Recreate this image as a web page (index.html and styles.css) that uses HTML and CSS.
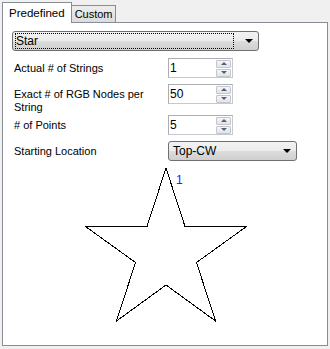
FILE: index.html
```html
<!DOCTYPE html>
<html lang="en">
<head>
    <meta charset="UTF-8">
    <title>Star Model</title>
    <link rel="stylesheet" href="styles.css">
</head>
<body>
    <div class="window">
        <div class="tabs">
            <div class="tab active">Predefined</div>
            <div class="tab">Custom</div>
        </div>

        <div class="panel">
            <div class="combo combo-wide">
                <span class="combo-text focused">Star</span>
                <span class="arrow"></span>
            </div>

            <div class="form">
                <div class="label">Actual # of Strings</div>
                <div class="spin">
                    <span class="spin-value">1</span>
                    <span class="spin-buttons"><span class="up"></span><span class="down"></span></span>
                </div>

                <div class="label label-top">Exact # of RGB Nodes per String</div>
                <div class="spin">
                    <span class="spin-value">50</span>
                    <span class="spin-buttons"><span class="up"></span><span class="down"></span></span>
                </div>

                <div class="label"># of Points</div>
                <div class="spin">
                    <span class="spin-value">5</span>
                    <span class="spin-buttons"><span class="up"></span><span class="down"></span></span>
                </div>

                <div class="label">Starting Location</div>
                <div class="combo combo-small">
                    <span class="combo-text">Top-CW</span>
                    <span class="arrow"></span>
                </div>
            </div>

            <svg class="preview" width="324" height="182" viewBox="0 0 324 182">
                <polygon points="163,6 182,64.5 243.5,64.5 193.5,100.5 212.5,159 163,123 113.5,159 132.5,100.5 82.5,64.5 144,64.5"
                         fill="none" stroke="#000" stroke-width="1"/>
                <text x="173" y="22" class="node-num">1</text>
            </svg>
        </div>
    </div>
</body>
</html>
```

FILE: styles.css
```css
* {
    margin: 0;
    padding: 0;
    box-sizing: border-box;
}

body {
    font-family: 'Liberation Sans', Arial, sans-serif;
    font-size: 11px;
    color: #000;
    background: #f0f0f0;
}

.window {
    width: 330px;
    height: 349px;
    padding: 2px 2px 0 2px;
}

.tabs {
    display: flex;
    align-items: flex-end;
    height: 20px;
}

.tab {
    height: 17px;
    padding: 2px 2px 0 3px;
    border: 1px solid #898c95;
    border-bottom: none;
    background: linear-gradient(#eeeeee, #dcdcdc);
    line-height: 13px;
    margin-left: -1px;
}

.tab.active {
    position: relative;
    z-index: 1;
    height: 21px;
    margin-left: 0;
    margin-bottom: -1px;
    padding: 4px 6px 0 6px;
    background: #fff;
    font-size: 11.5px;
}

.panel {
    width: 326px;
    height: 324px;
    border: 1px solid #898c95;
    background: #fff;
    padding: 8px 9px 0 9px;
}

.combo {
    display: flex;
    align-items: center;
    height: 20px;
    border: 1px solid #707070;
    border-radius: 3px;
    background: linear-gradient(#f2f2f2 0%, #ebebeb 50%, #dddddd 51%, #cfcfcf 100%);
    padding: 0 2px;
}

.combo-wide {
    width: 247px;
}

.combo-small {
    width: 129px;
    padding-left: 4px;
}

.combo-text {
    flex: 1;
    line-height: 14px;
    font-size: 12px;
}

.combo-text.focused {
    border: 1px dotted #000;
    height: 16px;
    line-height: 14px;
    margin-right: 11px;
}

.arrow {
    width: 0;
    height: 0;
    border-left: 4px solid transparent;
    border-right: 4px solid transparent;
    border-top: 4px solid #000;
    margin-right: 3px;
}

.form {
    display: grid;
    grid-template-columns: 154px 65px;
    grid-template-rows: 20px 25px 20px 21px;
    row-gap: 6px;
    margin-top: 7px;
    padding-left: 2px;
}

.label {
    align-self: center;
    line-height: 13px;
}

.label-top {
    align-self: start;
    padding-top: 4px;
    width: 150px;
}

.spin {
    display: flex;
    align-items: center;
    height: 20px;
    border: 1px solid #abadb3;
    border-right-color: #c5c8ce;
    border-bottom-color: #c5c8ce;
    padding: 0 1px 0 1px;
}

.spin-value {
    flex: 1;
    font-size: 12px;
    line-height: 14px;
}

.spin-buttons {
    display: flex;
    flex-direction: column;
    gap: 1px;
    width: 15px;
}

.spin-buttons span {
    display: flex;
    justify-content: center;
    align-items: center;
    height: 8px;
    border: 1px solid #c4c6cc;
    border-radius: 1px;
    background: linear-gradient(#f6f6f6, #e2e4e8);
}

.spin-buttons .up::after,
.spin-buttons .down::after {
    content: "";
    border-left: 3px solid transparent;
    border-right: 3px solid transparent;
}

.spin-buttons .up::after {
    border-bottom: 3px solid #4d6185;
}

.spin-buttons .down::after {
    border-top: 3px solid #4d6185;
}

.preview {
    display: block;
    margin: 0 -9px;
    shape-rendering: crispEdges;
}

.node-num {
    font-family: 'Liberation Sans', Arial, sans-serif;
    font-size: 12px;
    fill: #2020ff;
}
```
